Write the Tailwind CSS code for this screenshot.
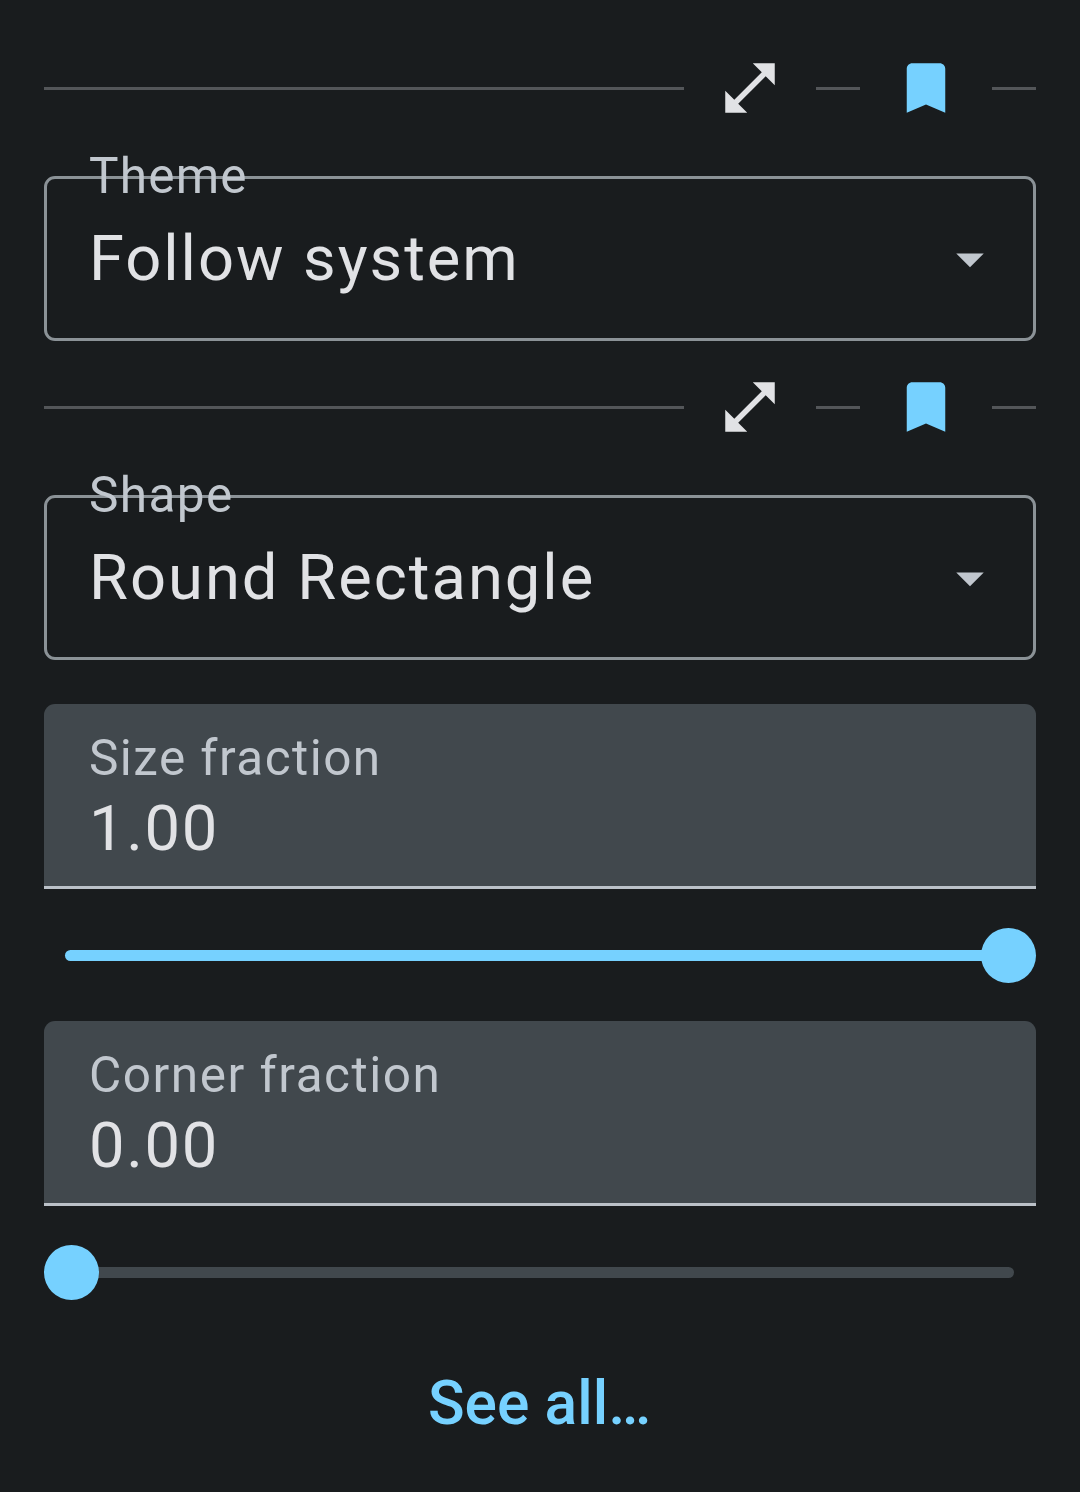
<!DOCTYPE html>
<html lang="en">
<head>
<meta charset="utf-8">
<title>Icon options</title>
<script src="https://cdn.jsdelivr.net/npm/@tailwindcss/browser@4"></script>
</head>
<body class="bg-[#191c1e]">
<main class="flex h-[1492px] w-[1080px] flex-col overflow-hidden bg-[#191c1e] px-[44px] pt-[22px] font-['Roboto',sans-serif] text-[#e1e2e5]">

  <div class="flex h-[132px] shrink-0 items-center">
    <div class="h-[3px] flex-1 bg-[#535659]"></div>
    <button class="flex size-[132px] items-center justify-center" aria-label="Expand">
      <svg class="size-[66px]" viewBox="0 0 24 24" fill="#e1e2e5"><path d="M21 11V3h-8l3.29 3.29-10 10L3 13v8h8l-3.29-3.29 10-10z"/></svg>
    </button>
    <div class="h-[3px] w-[44px] bg-[#535659]"></div>
    <button class="flex size-[132px] items-center justify-center" aria-label="Bookmark">
      <svg class="size-[66px]" viewBox="0 0 24 24" fill="#76d1ff"><path d="M17 3H7c-1.1 0-2 .9-2 2v16l7-3 7 3V5c0-1.1-.9-2-2-2z"/></svg>
    </button>
    <div class="h-[3px] w-[44px] bg-[#535659]"></div>
  </div>

  <div class="mt-[22px] flex h-[165px] shrink-0 rounded-[11px] border-3 border-[#8b9297] pr-[30px] pl-[42px]">
    <div class="-mt-[33px] flex-1">
      <div class="text-[49.5px] leading-[60px] tracking-[1.2px] text-[#c1c7ce]">Theme</div>
      <div class="mt-[14px] text-[63.25px] leading-[76px] tracking-[1.95px]">Follow system</div>
    </div>
    <svg class="mt-[47px] size-[66px]" viewBox="0 0 24 24" fill="#c1c7ce"><path d="M7 10l5 5 5-5z"/></svg>
  </div>

  <div class="flex h-[132px] shrink-0 items-center">
    <div class="h-[3px] flex-1 bg-[#535659]"></div>
    <button class="flex size-[132px] items-center justify-center" aria-label="Expand">
      <svg class="size-[66px]" viewBox="0 0 24 24" fill="#e1e2e5"><path d="M21 11V3h-8l3.29 3.29-10 10L3 13v8h8l-3.29-3.29 10-10z"/></svg>
    </button>
    <div class="h-[3px] w-[44px] bg-[#535659]"></div>
    <button class="flex size-[132px] items-center justify-center" aria-label="Bookmark">
      <svg class="size-[66px]" viewBox="0 0 24 24" fill="#76d1ff"><path d="M17 3H7c-1.1 0-2 .9-2 2v16l7-3 7 3V5c0-1.1-.9-2-2-2z"/></svg>
    </button>
    <div class="h-[3px] w-[44px] bg-[#535659]"></div>
  </div>

  <div class="mt-[22px] flex h-[165px] shrink-0 rounded-[11px] border-3 border-[#8b9297] pr-[30px] pl-[42px]">
    <div class="-mt-[33px] flex-1">
      <div class="text-[49.5px] leading-[60px] tracking-[1.4px] text-[#c1c7ce]">Shape</div>
      <div class="mt-[14px] text-[63.25px] leading-[76px] tracking-[2px]">Round Rectangle</div>
    </div>
    <svg class="mt-[47px] size-[66px]" viewBox="0 0 24 24" fill="#c1c7ce"><path d="M7 10l5 5 5-5z"/></svg>
  </div>

  <div class="mt-[44px] h-[185px] shrink-0 rounded-t-[11px] border-b-3 border-[#bbc1c8] bg-[#41484d] px-[45px] pt-[24px]">
    <div class="text-[49.5px] leading-[60px] tracking-[1.45px] text-[#c1c7ce]">Size fraction</div>
    <div class="mt-[2px] text-[63.25px] leading-[76px] tracking-[1.7px]">1.00</div>
  </div>

  <div class="mt-[39px] flex h-[55px] shrink-0 items-center pl-[21px]">
    <div class="-mr-[10px] h-[11px] flex-1 rounded-full bg-[#76d1ff]"></div>
    <div class="size-[55px] rounded-full bg-[#76d1ff]"></div>
  </div>

  <div class="mt-[38px] h-[185px] shrink-0 rounded-t-[11px] border-b-3 border-[#bbc1c8] bg-[#41484d] px-[45px] pt-[24px]">
    <div class="text-[49.5px] leading-[60px] tracking-[1.53px] text-[#c1c7ce]">Corner fraction</div>
    <div class="mt-[2px] text-[63.25px] leading-[76px] tracking-[1.7px]">0.00</div>
  </div>

  <div class="mt-[39px] flex h-[55px] shrink-0 items-center pr-[22px]">
    <div class="z-10 size-[55px] rounded-full bg-[#76d1ff]"></div>
    <div class="-ml-[10px] h-[11px] flex-1 rounded-full bg-[#41484d]"></div>
  </div>

  <button class="mt-[68px] mr-px self-center text-[60.5px] leading-[72px] font-medium tracking-[0.05px] text-[#76d1ff]">See all…</button>
</main>
</body>
</html>
